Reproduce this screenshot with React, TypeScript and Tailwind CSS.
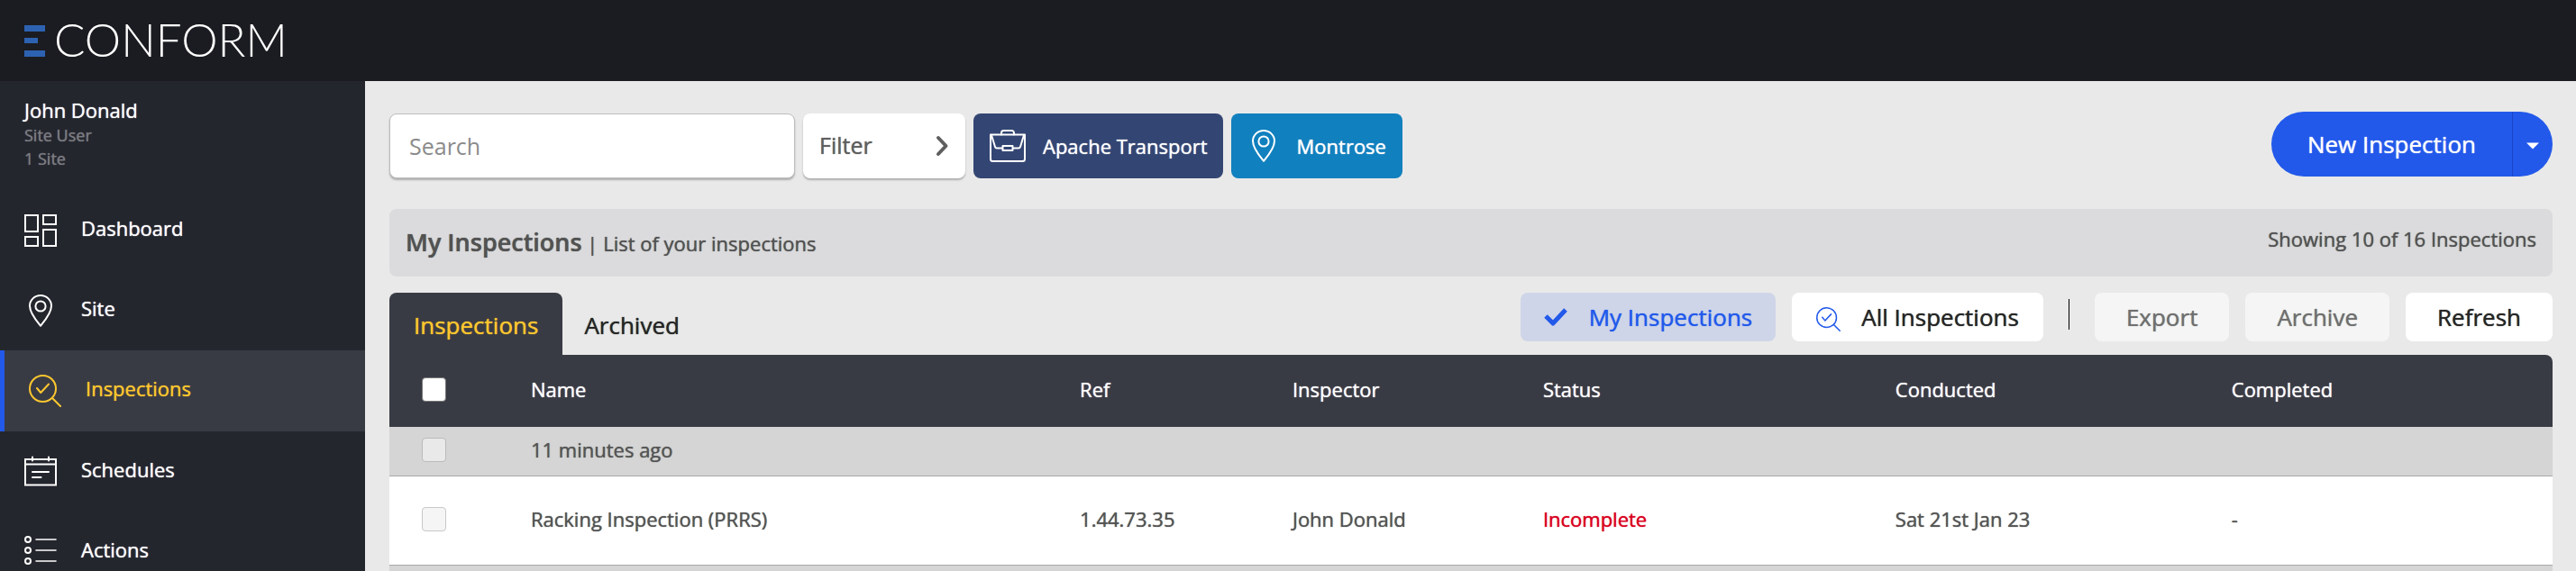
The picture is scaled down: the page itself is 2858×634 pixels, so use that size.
import type { ReactNode } from "react";

type IconProps = { className?: string };

const stroke = {
  fill: "none",
  stroke: "currentColor",
  strokeWidth: 2,
  strokeLinecap: "round" as const,
  strokeLinejoin: "round" as const,
  "aria-hidden": true,
};

function DashboardIcon({ className }: IconProps) {
  return (
    <svg viewBox="0 0 36 36" className={className} {...stroke} strokeLinejoin="miter">
      <path d="M1 1h14v18H1zM21 1h14v10H21zM1 25h14v10H1zM21 17h14v18H21z" />
    </svg>
  );
}

function PinIcon({ className }: IconProps) {
  return (
    <svg viewBox="0 0 36 36" className={className} {...stroke}>
      <path d="M18 34.8C14 30 6 21 6 12.600a12 11.600 0 0 1 24 0C30 21 22 30 18 34.800z" />
      <circle cx="18" cy="13" r="5.600" />
    </svg>
  );
}

function InspectIcon({ className }: IconProps) {
  return (
    <svg viewBox="0 0 36 36" className={className} {...stroke}>
      <circle cx="15.500" cy="15.500" r="14.500" />
      <path d="M9 15l4.200 5L22 10.500M26 26l9 9" />
    </svg>
  );
}

function CalendarIcon({ className }: IconProps) {
  return (
    <svg viewBox="0 0 36 36" className={className} {...stroke} strokeLinejoin="miter">
      <path d="M1 4h34v28.500H1zM1 9.600h34M9 1.500v4M27 1.500v4M9 18h18M9 24h9.500" />
    </svg>
  );
}

function ListIcon({ className }: IconProps) {
  return (
    <svg viewBox="0 0 36 36" className={className} {...stroke}>
      <circle cx="4" cy="4" r="3" />
      <circle cx="4" cy="16" r="3" />
      <circle cx="4" cy="28" r="3" />
      <path strokeWidth="1.600" d="M13 4h22M13 16h22M13 28h22" />
    </svg>
  );
}

function BriefcaseIcon({ className }: IconProps) {
  return (
    <svg viewBox="0 0 42 36" className={className} {...stroke}>
      <path d="M2 5.500h38v27a2.500 2.500 0 0 1-2.500 2.500H4.500a2.500 2.500 0 0 1-2.500-2.500z" />
      <path d="M14 5.500V3.500A2.500 2.500 0 0 1 16.500 1h9A2.500 2.500 0 0 1 28 3.500v2" />
      <path d="M3 6l4 13a2 2 0 0 0 2 1.500H15M39 6l-4 13a2 2 0 0 1-2 1.500H27M15.500 18h11v5h-11z" />
    </svg>
  );
}

function Logo() {
  return (
    <a href="#home" aria-label="Econform" className="flex items-center gap-[10px] text-white">
      <svg viewBox="0 0 23 35" className="h-[35px] w-[23px]" aria-hidden="true">
        <path fill="#2d62b1" d="M0 0h23v7H0zM0 14h15v6H0zM0 28h23v7H0z" />
      </svg>
      <span className="pb-0.5 font-[Lato] text-[51px] leading-[50px] font-light">CONFORM</span>
    </a>
  );
}

const navItems = [
  { label: "Dashboard", Icon: DashboardIcon },
  { label: "Site", Icon: PinIcon },
  { label: "Inspections", Icon: InspectIcon, active: true },
  { label: "Schedules", Icon: CalendarIcon },
  { label: "Actions", Icon: ListIcon },
];

function Sidebar() {
  return (
    <aside className="w-[405px] shrink-0 bg-[#24262e] text-white">
      <div className="px-[27px] pt-[17px] pb-[22px]">
        <p className="text-[22px] leading-[30px]">John Donald</p>
        <p className="text-[18px] leading-[26px] text-[#7b7c81]">Site User</p>
        <p className="text-[18px] leading-[26px] text-[#7b7c81]">1 Site</p>
      </div>
      <nav>
        {navItems.map(({ label, Icon, active }) => (
          <a
            key={label}
            href={"#" + label.toLowerCase()}
            aria-current={active ? "page" : undefined}
            className={
              active
                ? "flex h-[90px] items-center gap-[27px] border-l-[5px] border-[#2259ea] bg-[#393b44] px-[27px] text-[#fdc72f]"
                : "flex h-[89px] items-center gap-[27px] px-[27px]"
            }
          >
            <Icon className="size-9 shrink-0" />
            <span className="pb-[6px] text-[22px] leading-[30px]">{label}</span>
          </a>
        ))}
      </nav>
    </aside>
  );
}

function Toolbar() {
  return (
    <div className="flex items-center gap-[9px]">
      <input
        type="search"
        aria-label="Search"
        placeholder="Search"
        className="h-[72px] w-[450px] rounded-lg border border-[#bdbdbd] bg-white px-[21px] text-[25px] shadow-[0_2px_2px_rgba(0,0,0,0.25)] placeholder:text-[#8b8b8b]"
      />
      <button className="flex h-[72px] w-[180px] items-center justify-between rounded-lg bg-white px-[18px] text-[25px] text-[#5f5f5f] shadow-[0_2px_2px_rgba(0,0,0,0.25)]">
        Filter
        <svg viewBox="0 0 18 24" className="h-6 w-[18px]" {...stroke} strokeWidth={4}>
          <path d="M6 3l8.500 9L6 21" />
        </svg>
      </button>
      <button className="flex h-[72px] items-center gap-[18px] rounded-lg bg-[#334673] px-[17px] text-[22px] text-white">
        <BriefcaseIcon className="h-9 w-[42px]" />
        Apache Transport
      </button>
      <button className="flex h-[72px] items-center gap-[19px] rounded-lg bg-[#1180be] px-[18px] text-[22px] text-white">
        <PinIcon className="size-9" />
        Montrose
      </button>
      <div className="ml-auto flex h-[72px] -translate-y-0.5 overflow-hidden rounded-full bg-[#2259ea] text-white">
        <button className="border-r border-[#1a45c4] px-10 text-[26px]">New Inspection</button>
        <button aria-label="More options" className="flex w-[44px] items-center justify-center">
          <svg viewBox="0 0 14 8" className="mt-1 h-2 w-[14px]" aria-hidden="true">
            <path fill="currentColor" d="M0 .5h14L7 7.500z" />
          </svg>
        </button>
      </div>
    </div>
  );
}

function ActionButton({
  children,
  look,
  disabled,
}: {
  children: ReactNode;
  look: string;
  disabled?: boolean;
}) {
  return (
    <button disabled={disabled} className={"flex h-[54px] items-center rounded-lg text-[26px] " + look}>
      {children}
    </button>
  );
}

function Tabs() {
  return (
    <div className="flex items-start justify-between">
      <div role="tablist" className="flex text-[26px]">
        <button role="tab" aria-selected="true" className="h-[69px] rounded-t-lg bg-[#393b44] px-[27px] pt-1 text-[#fdc72f]">
          Inspections
        </button>
        <button role="tab" aria-selected="false" className="h-[69px] px-6 pt-1 text-[#252525]">
          Archived
        </button>
      </div>
      <div className="flex items-start gap-[18px]">
        <ActionButton look="gap-6 bg-[#cfd5e8] px-[26px] text-[#2259ea]">
          <svg viewBox="0 0 26 24" className="h-6 w-[26px]" aria-hidden="true">
            <path fill="none" stroke="currentColor" strokeWidth="5" strokeLinejoin="round" d="M2 11l8 8L24 4" />
          </svg>
          My Inspections
        </ActionButton>
        <ActionButton look="gap-[23px] bg-white px-[27px] text-[#252525]">
          <InspectIcon className="mt-1 size-[27px] text-[#2259ea]" />
          All Inspections
        </ActionButton>
        <div className="mx-[10px] mt-[7px] h-[34px] w-px bg-black" />
        <ActionButton disabled look="bg-[#f5f5f5] px-[35px] text-[#6f6f6f]">
          Export
        </ActionButton>
        <ActionButton disabled look="bg-[#f5f5f5] px-[35px] text-[#6f6f6f]">
          Archive
        </ActionButton>
        <ActionButton look="bg-white px-[35px] text-[#252525]">Refresh</ActionButton>
      </div>
    </div>
  );
}

function Check({ label, look }: { label: string; look: string }) {
  return (
    <input
      type="checkbox"
      aria-label={label}
      className={"ml-9 block size-[27px] appearance-none rounded-[4px] border " + look}
    />
  );
}

const columns = ["Name", "Ref", "Inspector", "Status", "Conducted"];

function InspectionTable() {
  return (
    <table className="w-full table-fixed text-left text-[22px]">
      <colgroup>
        <col className="w-[6.54%]" />
        <col className="w-[25.38%]" />
        <col className="w-[9.83%]" />
        <col className="w-[11.58%]" />
        <col className="w-[16.29%]" />
        <col className="w-[15.54%]" />
        <col />
      </colgroup>
      <thead className="text-white">
        <tr className="h-20">
          <th className="bg-[#393b44] pb-[3px]">
            <Check label="Select all inspections" look="border-[#767676] bg-white" />
          </th>
          {columns.map((name) => (
            <th key={name} className="bg-[#393b44] pb-[3px] font-normal">
              {name}
            </th>
          ))}
          <th className="rounded-tr-lg bg-[#393b44] pb-[3px] font-normal">Completed</th>
        </tr>
      </thead>
      <tbody className="text-[#545454]">
        <tr className="h-[54px] border-b border-[#a8a8a8] bg-[#d5d5d5] *:pb-0.5">
          <td>
            <Check label="Select group" look="border-[#bababa] bg-[#e9e9e9]" />
          </td>
          <td colSpan={6}>11 minutes ago</td>
        </tr>
        <tr className="h-[99px] border-b border-[#a8a8a8] bg-white *:pb-0.5">
          <td>
            <Check label="Select Racking Inspection (PRRS)" look="border-[#c8c8c8] bg-[#f5f5f5]" />
          </td>
          <td>Racking Inspection (PRRS)</td>
          <td>1.44.73.35</td>
          <td>John Donald</td>
          <td className="text-[#d9001f]">Incomplete</td>
          <td>Sat 21st Jan 23</td>
          <td>-</td>
        </tr>
        <tr className="h-[54px] bg-[#d5d5d5]">
          <td colSpan={7} />
        </tr>
      </tbody>
    </table>
  );
}

export default function App() {
  return (
    <div className="flex h-screen flex-col overflow-hidden bg-[#e9e9e9] font-['Open_Sans',sans-serif]">
      <header className="flex h-[90px] shrink-0 items-center bg-[#1b1c21] px-[27px]">
        <Logo />
      </header>
      <div className="flex min-h-0 flex-1 [&_:is(p,a,button,h1,th,td)]:[text-shadow:0_0_1px_currentColor]">
        <Sidebar />
        <main className="min-w-0 flex-1 pt-9 pr-[26px] pl-[27px]">
          <Toolbar />
          <div className="mt-[34px] flex h-[75px] justify-between rounded-lg bg-[#dbdbdd] px-[18px] text-[22px] text-[#525252]">
            <h1 className="self-center">
              <span className="text-[27px] font-semibold">My Inspections</span> | List of your inspections
            </h1>
            <p className="pt-[18px] leading-[30px]">Showing 10 of 16 Inspections</p>
          </div>
          <div className="mt-[18px]">
            <Tabs />
            <InspectionTable />
          </div>
        </main>
      </div>
    </div>
  );
}
